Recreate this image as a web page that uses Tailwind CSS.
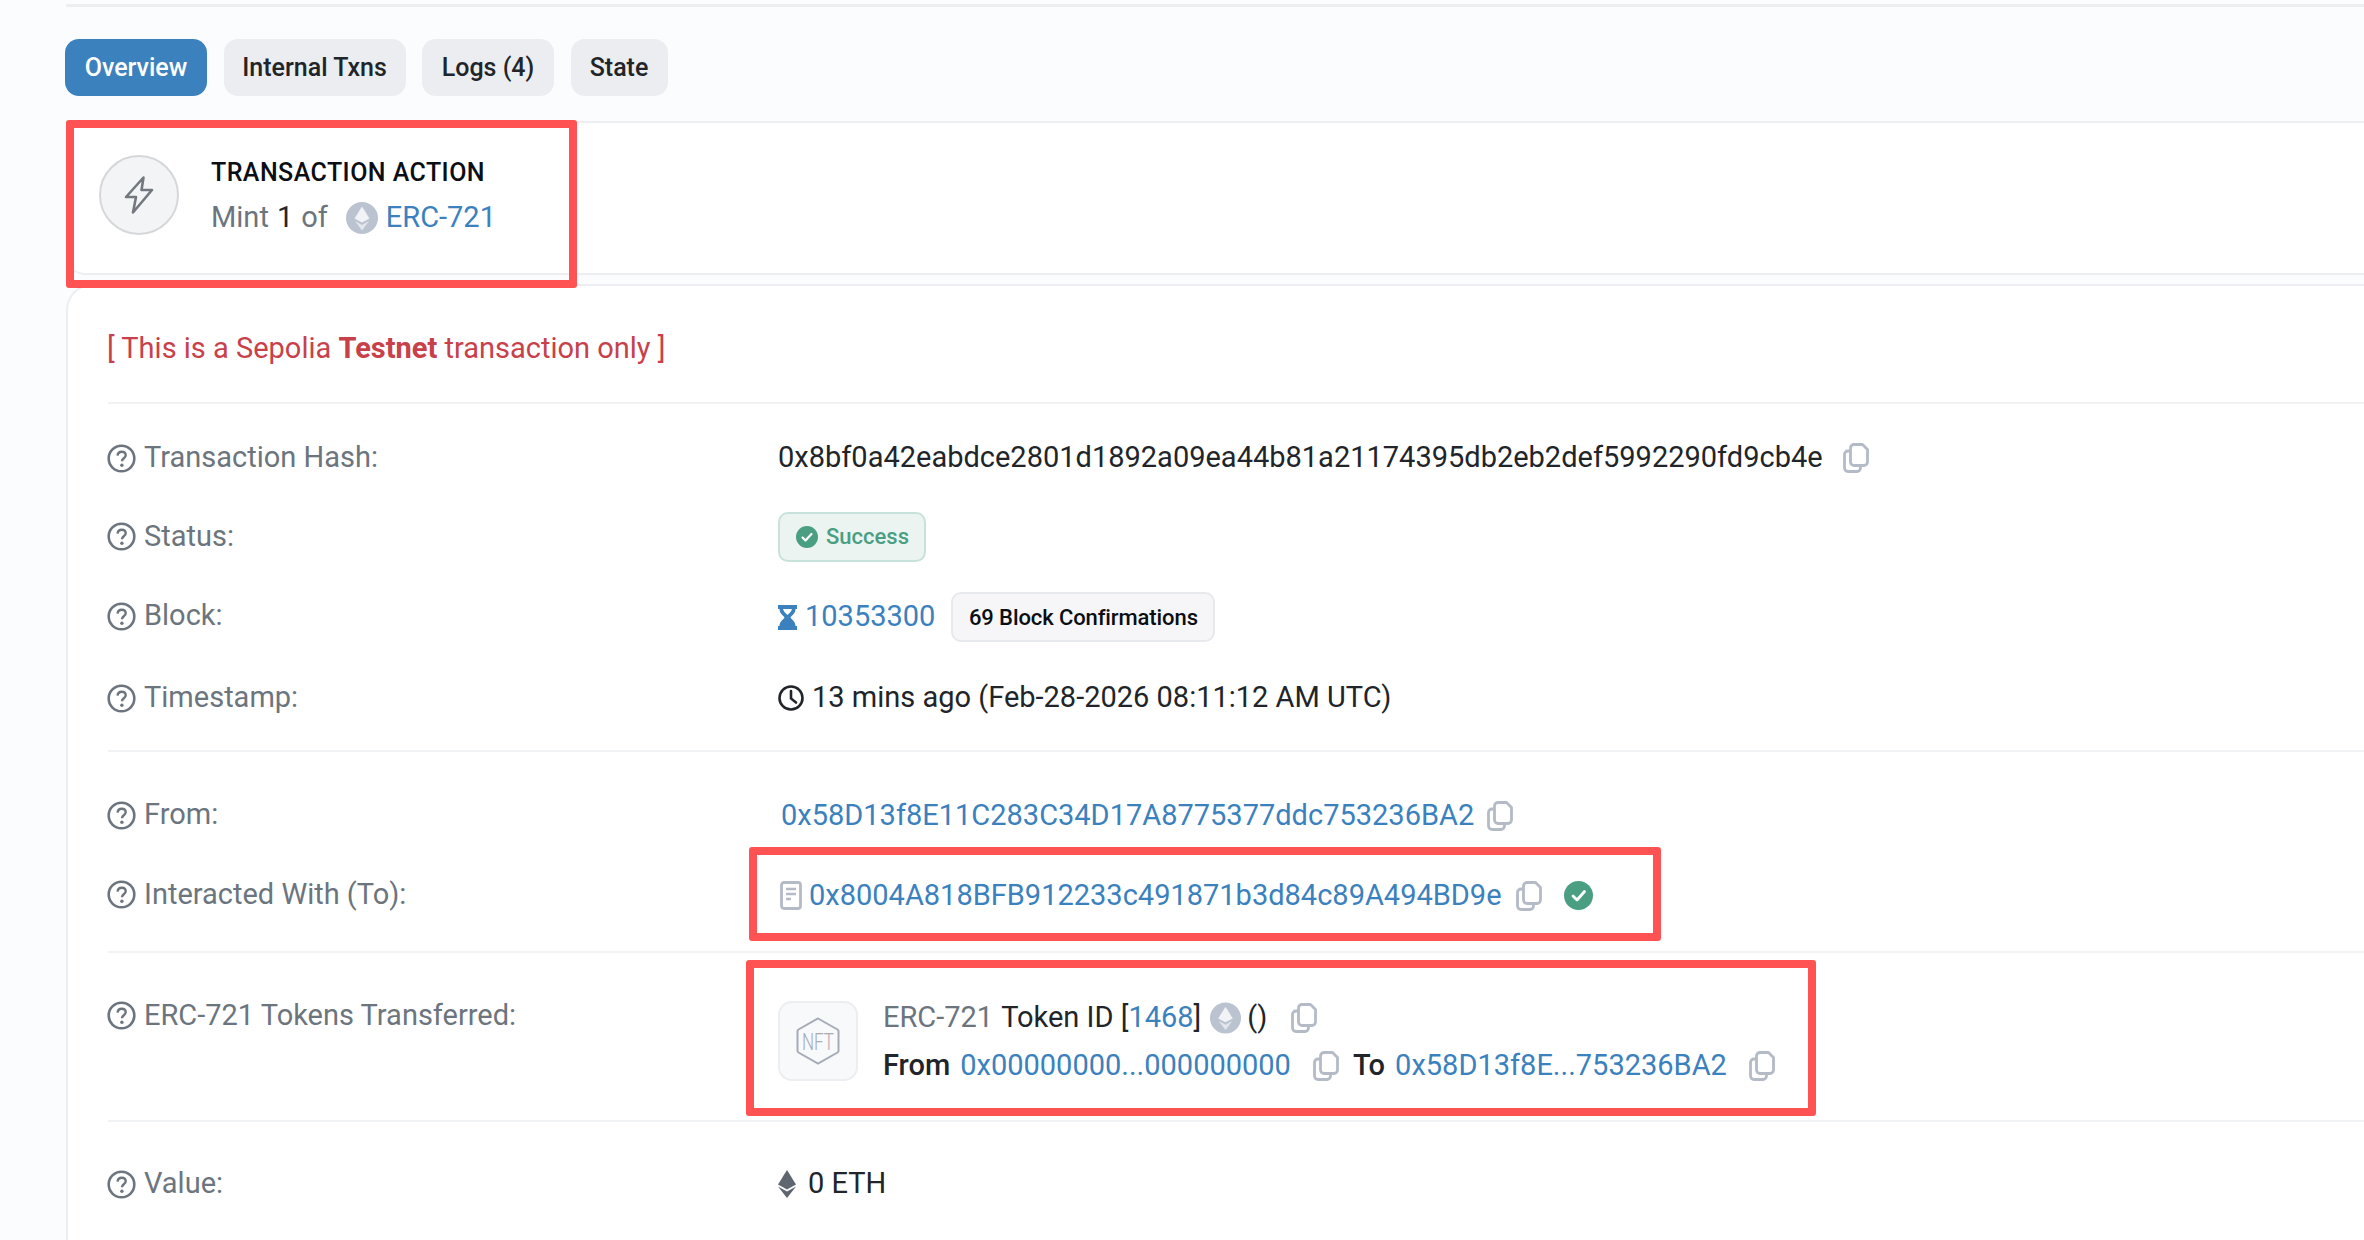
<!DOCTYPE html>
<html>
<head>
<meta charset="utf-8">
<script src="https://cdn.jsdelivr.net/npm/@tailwindcss/browser@4"></script>
</head>
<body class="relative w-[2364px] h-[1240px] overflow-hidden bg-[#fbfcfe] font-['Roboto',sans-serif] text-[29px] text-[#212529]">
<svg class="hidden">
  <symbol id="q" viewBox="0 0 29 29"><circle cx="14.5" cy="14.5" r="12.8" fill="none" stroke="#6c757d" stroke-width="2.6"/><path d="M10.6 11.6c.2-2.4 1.900-3.800 4.100-3.800 2.300 0 4 1.400 4 3.500 0 3-3.700 3-3.700 5.900" fill="none" stroke="#6c757d" stroke-width="2.400"/><circle cx="14.900" cy="21.300" r="1.700" fill="#6c757d"/></symbol>
  <symbol id="copy" viewBox="0 0 26 30"><path d="M11 1.500h8.500l5 5V19c0 1.900-1.600 3.500-3.500 3.500H11c-1.900 0-3.500-1.600-3.500-3.500V5c0-1.900 1.600-3.500 3.500-3.500z" fill="none" stroke="#b4bbc7" stroke-width="2.800" stroke-linejoin="round"/><path d="M7 8H5C3.100 8 1.500 9.600 1.500 11.500V25c0 1.900 1.600 3.500 3.500 3.500h9c1.900 0 3.500-1.600 3.500-3.500v-2" fill="none" stroke="#b4bbc7" stroke-width="2.800"/></symbol>
  <symbol id="eth" viewBox="0 0 32 32"><circle cx="16" cy="16" r="16" fill="#bcc3d0"/><path d="M16 4.500 8.500 16.500 16 20.500l7.500-4z" fill="#f1f3f6"/><path d="M9 19 16 23l7-4-7 9.500z" fill="#e3e6ec"/></symbol>
</svg>

<div class="ml-[66px] mt-[4px] h-[3px] bg-[#eceef1]"></div>

<nav class="flex gap-[16.5px] ml-[65px] mt-[32px] text-[25px] font-medium">
  <a class="w-[142px] h-[57px] flex items-center justify-center rounded-[14px] bg-[#3b81be] text-white">Overview</a>
  <a class="w-[182px] h-[57px] flex items-center justify-center rounded-[14px] bg-[#ecedf0]">Internal Txns</a>
  <a class="w-[132px] h-[57px] flex items-center justify-center rounded-[14px] bg-[#ecedf0]">Logs (4)</a>
  <a class="w-[97px] h-[57px] flex items-center justify-center rounded-[14px] bg-[#ecedf0]">State</a>
</nav>

<section class="ml-[66px] mt-[25px] h-[154px] bg-white border-y-2 border-[#eceef1] rounded-bl-[20px] flex items-center pl-[33px]">
  <div class="w-[80px] h-[80px] -mt-[6px] rounded-full bg-[#f3f4f6] border-2 border-[#d5d7da] flex items-center justify-center">
    <svg width="30" height="38" viewBox="0 0 30 38"><path d="M19.500 1.500 2 21h10l-3 15.500L28 14H17.500z" fill="none" stroke="#73787f" stroke-width="2.600" stroke-linejoin="round"/></svg>
  </div>
  <div class="ml-[32px] -mt-[1px]">
    <div class="text-[25px] font-medium tracking-[0.45px] text-[#0b0e12] leading-[32px]">TRANSACTION ACTION</div>
    <div class="flex items-center mt-[9px] h-[40px] text-[#6c757d]">
      <span>Mint</span><span class="ml-[8px] text-[#212529]">1</span><span class="ml-[8px]">of</span>
      <svg class="ml-[18px] w-[32px] h-[32px]"><use href="#eth"/></svg>
      <a class="ml-[8px] text-[#3b81be]">ERC-721</a>
    </div>
  </div>
</section>

<main class="ml-[66px] mt-[9px] h-[1000px] bg-white border-t-2 border-l-2 border-[#eceef1] rounded-tl-[26px]">
  <div class="h-[118px] ml-[40px] pt-[10px] border-b-2 border-[#f1f2f4] flex items-center text-[#c8414a]">
    <p class="-ml-[1px]">[ This is a Sepolia <b class="font-bold">Testnet</b> transaction only ]</p>
  </div>

  <div class="ml-[39px] pt-[15px]">
    <div class="flex items-center h-[78px]">
      <div class="w-[671px] flex items-center gap-[8px] text-[#6c757d]"><svg class="w-[29px] h-[29px]"><use href="#q"/></svg>Transaction Hash:</div>
      <div class="flex items-center">0x8bf0a42eabdce2801d1892a09ea44b81a21174395db2eb2def5992290fd9cb4e<svg class="ml-[20px] w-[26px] h-[30px]"><use href="#copy"/></svg></div>
    </div>
    <div class="flex items-center h-[79px]">
      <div class="w-[671px] flex items-center gap-[8px] text-[#6c757d]"><svg class="w-[29px] h-[29px]"><use href="#q"/></svg>Status:</div>
      <div class="w-[148px] h-[50px] rounded-[10px] bg-[#ecf4f2] border-2 border-[#c6e2da] flex items-center pl-[16px] gap-[8px] text-[22px] font-medium text-[#4a9f83]">
        <svg width="22" height="22" viewBox="0 0 22 22"><circle cx="11" cy="11" r="11" fill="#4a9f83"/><path d="M6.500 11.500l3 3 6-6.500" fill="none" stroke="#fff" stroke-width="2.200" stroke-linecap="round" stroke-linejoin="round"/></svg>Success
      </div>
    </div>
    <div class="flex items-center h-[82px]">
      <div class="w-[671px] -mt-[2px] flex items-center gap-[8px] text-[#6c757d]"><svg class="w-[29px] h-[29px]"><use href="#q"/></svg>Block:</div>
      <svg width="19" height="25" viewBox="0 0 19 25"><path d="M0 0h19v4h-1.500c0 4.500-3.500 6-5 8.500 1.500 2.500 5 4 5 8.500H19v4H0v-4h1.500c0-4.500 3.500-6 5-8.500-1.500-2.500-5-4-5-8.500H0z" fill="#3b81be"/><path d="M5 4h9c-.5 2.500-3 4.500-4.500 6C8 8.500 5.500 6.500 5 4z" fill="#fff"/></svg>
      <a class="ml-[8px] text-[#3b81be]">10353300</a>
      <div class="ml-[16px] w-[264px] h-[50px] rounded-[10px] bg-[#f6f6f8] border-2 border-[#e8e9ed] flex items-center justify-center text-[22px] font-medium tracking-[-0.1px] text-[#0b0e12]">69 Block Confirmations</div>
    </div>
    <div class="flex items-center h-[80px]">
      <div class="w-[671px] flex items-center gap-[8px] text-[#6c757d]"><svg class="w-[29px] h-[29px]"><use href="#q"/></svg>Timestamp:</div>
      <svg width="26" height="26" viewBox="0 0 26 26"><circle cx="13" cy="13" r="11.500" fill="none" stroke="#212529" stroke-width="2.600"/><path d="M13 6v7.500l5 4" fill="none" stroke="#212529" stroke-width="2.600" stroke-linecap="round"/></svg>
      <span class="ml-[8px]">13 mins ago (Feb-28-2026 08:11:12 AM UTC)</span>
    </div>
  </div>

  <div class="ml-[40px] mt-[12px] h-[2px] bg-[#f1f2f4]"></div>

  <div class="ml-[39px] pt-[24px]">
    <div class="flex items-center h-[80px]">
      <div class="w-[671px] -mt-[2px] flex items-center gap-[8px] text-[#6c757d]"><svg class="w-[29px] h-[29px]"><use href="#q"/></svg>From:</div>
      <a class="ml-[3px] text-[#3b81be]">0x58D13f8E11C283C34D17A8775377ddc753236BA2</a>
      <svg class="ml-[13px] w-[26px] h-[30px]"><use href="#copy"/></svg>
    </div>
    <div class="flex items-center h-[79px]">
      <div class="w-[671px] -mt-[2px] flex items-center gap-[8px] text-[#6c757d]"><svg class="w-[29px] h-[29px]"><use href="#q"/></svg>Interacted With (To):</div>
      <svg class="ml-[2px]" width="22" height="29" viewBox="0 0 22 29"><rect x="1.500" y="1.500" width="19" height="26" rx="2.500" fill="none" stroke="#b4bbc7" stroke-width="2.800"/><path d="M6 8h10M6 13h10M6 18h5" stroke="#b4bbc7" stroke-width="2.400"/></svg>
      <a class="ml-[7px] text-[#3b81be]">0x8004A818BFB912233c491871b3d84c89A494BD9e</a>
      <svg class="ml-[14px] w-[26px] h-[30px]"><use href="#copy"/></svg>
      <svg class="ml-[22px]" width="29" height="29" viewBox="0 0 29 29"><circle cx="14.500" cy="14.500" r="14.500" fill="#4a9f83"/><path d="M9 15l4 4 7.500-8.500" fill="none" stroke="#fff" stroke-width="2.800" stroke-linecap="round" stroke-linejoin="round"/></svg>
    </div>
  </div>

  <div class="ml-[40px] mt-[16px] h-[2px] bg-[#f1f2f4]"></div>

  <div class="ml-[39px] pt-[48px] h-[167px] flex">
    <div class="w-[671px] h-[29px] flex items-center gap-[8px] text-[#6c757d]"><svg class="w-[29px] h-[29px]"><use href="#q"/></svg>ERC-721 Tokens Transferred:</div>
    <div class="w-[80px] h-[80px] rounded-[14px] bg-[#f8f9fa] border-2 border-[#eceef1] flex items-center justify-center">
      <svg width="44" height="48" viewBox="0 0 44 48"><path d="M22 1.500 41.500 12.500c.6.400 1 1 1 1.700v19.600c0 .7-.4 1.300-1 1.700L22 46.500 2.500 35.500c-.6-.4-1-1-1-1.700V14.200c0-.7.4-1.300 1-1.700z" fill="none" stroke="#a6acb6" stroke-width="2"/><text x="22" y="32.500" text-anchor="middle" font-family="Roboto" font-weight="300" font-size="24" textLength="32" lengthAdjust="spacingAndGlyphs" fill="#a6acb6">NFT</text></svg>
    </div>
    <div class="ml-[25px] -mt-[1px]">
      <div class="flex items-center h-[36px]">
        <span class="text-[#6c757d]">ERC-721</span><span class="ml-[8px]">Token ID [</span><a class="text-[#3b81be]">1468</a><span>]</span>
        <svg class="ml-[9px] w-[31px] h-[32px]"><use href="#eth"/></svg>
        <span class="ml-[6px]">()</span>
        <svg class="ml-[24px] w-[26px] h-[30px]"><use href="#copy"/></svg>
      </div>
      <div class="flex items-center h-[36px] mt-[12px]">
        <span class="font-medium">From</span><a class="ml-[10px] text-[#3b81be]">0x00000000...000000000</a>
        <svg class="ml-[22px] w-[26px] h-[30px]"><use href="#copy"/></svg>
        <span class="ml-[14px] font-medium">To</span><a class="ml-[10px] text-[#3b81be]">0x58D13f8E...753236BA2</a>
        <svg class="ml-[22px] w-[26px] h-[30px]"><use href="#copy"/></svg>
      </div>
    </div>
  </div>

  <div class="ml-[40px] h-[2px] bg-[#f1f2f4]"></div>

  <div class="ml-[39px] flex items-center h-[124px]">
    <div class="w-[671px] flex items-center gap-[8px] text-[#6c757d]"><svg class="w-[29px] h-[29px]"><use href="#q"/></svg>Value:</div>
    <svg width="18" height="28" viewBox="0 0 18 28"><path d="M9 0 0 14.500 9 19.500l9-5z" fill="#5f6670"/><path d="M0 16.500 9 21.500l9-5L9 28z" fill="#5f6670"/></svg>
    <span class="ml-[12px]">0 ETH</span>
  </div>
</main>

<div class="absolute left-[66px] top-[120px] w-[511px] h-[168px] border-8 border-[#ff5353] rounded-[3px]"></div>
<div class="absolute left-[749px] top-[847px] w-[912px] h-[94px] border-8 border-[#ff5353] rounded-[3px]"></div>
<div class="absolute left-[746px] top-[960px] w-[1070px] h-[156px] border-8 border-[#ff5353] rounded-[3px]"></div>
</body>
</html>
